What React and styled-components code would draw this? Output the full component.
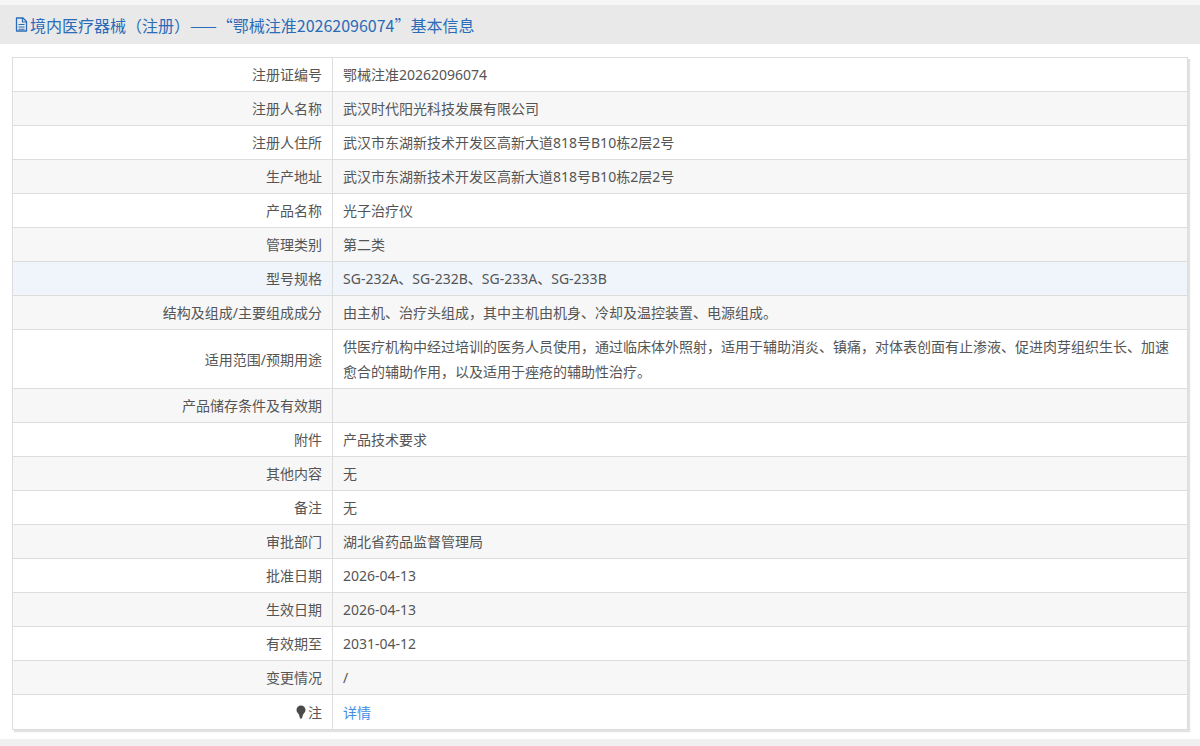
import React from "react";
import styled, { createGlobalStyle } from "styled-components";

const GlobalStyle = createGlobalStyle`
  body {
    margin: 0;
    background: #fff;
    font-family: "Noto Sans", "Noto Sans CJK SC", sans-serif;
  }
`;

const rows = [
  { label: "注册证编号", value: "鄂械注准20262096074" },
  { label: "注册人名称", value: "武汉时代阳光科技发展有限公司" },
  { label: "注册人住所", value: "武汉市东湖新技术开发区高新大道818号B10栋2层2号" },
  { label: "生产地址", value: "武汉市东湖新技术开发区高新大道818号B10栋2层2号" },
  { label: "产品名称", value: "光子治疗仪" },
  { label: "管理类别", value: "第二类" },
  { label: "型号规格", value: "SG-232A、SG-232B、SG-233A、SG-233B", hover: true },
  { label: "结构及组成/主要组成成分", value: "由主机、治疗头组成，其中主机由机身、冷却及温控装置、电源组成。" },
  {
    label: "适用范围/预期用途",
    value:
      "供医疗机构中经过培训的医务人员使用，通过临床体外照射，适用于辅助消炎、镇痛，对体表创面有止渗液、促进肉芽组织生长、加速愈合的辅助作用，以及适用于痤疮的辅助性治疗。",
  },
  { label: "产品储存条件及有效期", value: "" },
  { label: "附件", value: "产品技术要求" },
  { label: "其他内容", value: "无" },
  { label: "备注", value: "无" },
  { label: "审批部门", value: "湖北省药品监督管理局" },
  { label: "批准日期", value: "2026-04-13" },
  { label: "生效日期", value: "2026-04-13" },
  { label: "有效期至", value: "2031-04-12" },
  { label: "变更情况", value: "/" },
];

function FileIcon() {
  return (
    <svg width="13" height="15" viewBox="0 0 13 15" fill="none">
      <path d="M1.5 1h6.5l3.5 3.5V14h-10z" stroke="#2b6cb8" strokeWidth="1.3" strokeLinejoin="round" />
      <path d="M7.5 1v4h4" stroke="#2b6cb8" strokeWidth="1.2" />
      <path d="M3.5 7.5h6M3.5 10h6M3.5 12.2h6" stroke="#2b6cb8" strokeWidth="1.1" />
    </svg>
  );
}

function MarkerIcon() {
  return (
    <svg width="10" height="14" viewBox="0 0 10 14">
      <path d="M5 0.5a4.5 4.5 0 0 1 4.5 4.5c0 2-1.6 3.3-2.4 4.5L5.9 13.5H4.1L2.9 9.5C2.1 8.3 0.5 7 0.5 5A4.5 4.5 0 0 1 5 0.5z" fill="#4a4a4a" />
    </svg>
  );
}

export default function App() {
  return (
    <>
      <GlobalStyle />
      <Page>
        <TitleBar>
          <FileIcon />
          <Title>境内医疗器械（注册）——“鄂械注准20262096074”基本信息</Title>
        </TitleBar>
        <Table>
          {rows.map((r, i) => (
            <Row key={r.label} $even={i % 2 === 1} $hover={r.hover}>
              <Label>{r.label}</Label>
              <Value>{r.value}</Value>
            </Row>
          ))}
          <Row $last>
            <Label>
              <MarkerIcon />
              注
            </Label>
            <Value>
              <Link href="#">详情</Link>
            </Value>
          </Row>
        </Table>
        <Footer />
      </Page>
    </>
  );
}

const Page = styled.div`
  width: 100%;
  border-top: 5px solid #f6f6f6;
`;

const TitleBar = styled.div`
  height: 39px;
  background: #e9e9e9;
  display: flex;
  align-items: center;
  padding-left: 15px;
  gap: 2px;
`;

const Title = styled.h1`
  margin: 0;
  font-size: 16px;
  font-weight: normal;
  color: #2b6cb8;
  font-family: "Noto Sans CJK SC", "Noto Sans", sans-serif;
`;

const Table = styled.div`
  margin: 13px 12px 0;
  border: 1px solid #dddddd;
  box-shadow: 2px 2px 1px #e2e2e2;
`;

const Row = styled.div`
  display: grid;
  grid-template-columns: 320px 1fr;
  background: ${(p) => (p.$hover ? "#f0f5fb" : p.$even ? "#f7f7f7" : "#ffffff")};
  border-bottom: ${(p) => (p.$last ? "none" : "1px solid #dddddd")};
  min-height: ${(p) => (p.$last ? "34px" : "33px")};
  font-size: 14px;
  color: #555;
`;

const Label = styled.div`
  display: flex;
  align-items: center;
  justify-content: flex-end;
  gap: 2px;
  padding: 4px 10px;
  line-height: 25px;
  border-right: 1px solid #dddddd;
`;

const Value = styled.div`
  padding: 4px 10px;
  line-height: 25px;
  align-self: center;
`;

const Link = styled.a`
  color: #3d8ee8;
  text-decoration: none;
`;

const Footer = styled.div`
  margin-top: 9px;
  height: 8px;
  background: #f0f0f0;
`;
